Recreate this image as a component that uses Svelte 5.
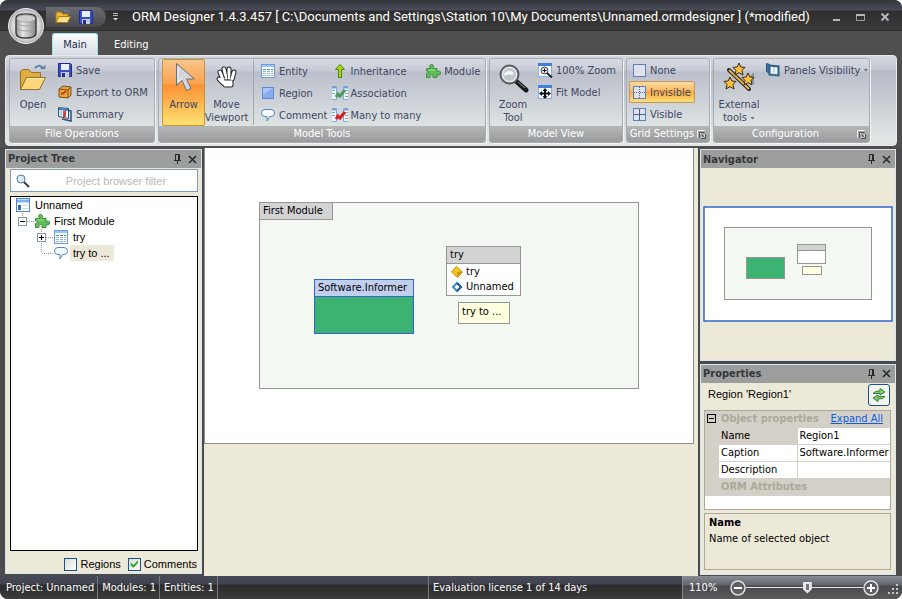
<script lang="ts">
	interface Tool {
		label: string;
		icon: string;
		active?: boolean;
		menu?: boolean;
	}

	interface TreeRow {
		label: string;
		icon: string;
		level: number;
		expander?: '+' | '-';
		last?: boolean;
		selected?: boolean;
	}

	const fileTools: Tool[] = [
		{ label: 'Save', icon: 'save' },
		{ label: 'Export to ORM', icon: 'export' },
		{ label: 'Summary', icon: 'summary' }
	];

	const modelTools: Tool[][] = [
		[
			{ label: 'Entity', icon: 'entity' },
			{ label: 'Region', icon: 'region' },
			{ label: 'Comment', icon: 'comment' }
		],
		[
			{ label: 'Inheritance', icon: 'inherit' },
			{ label: 'Association', icon: 'assoc' },
			{ label: 'Many to many', icon: 'many' }
		],
		[{ label: 'Module', icon: 'module' }]
	];

	const viewTools: Tool[] = [
		{ label: '100% Zoom', icon: 'zoom100' },
		{ label: 'Fit Model', icon: 'fit' }
	];

	const gridTools: Tool[] = [
		{ label: 'None', icon: 'gridnone' },
		{ label: 'Invisible', icon: 'gridhidden', active: true },
		{ label: 'Visible', icon: 'grid' }
	];

	const tree: TreeRow[] = [
		{ label: 'Unnamed', icon: 'project', level: 0 },
		{ label: 'First Module', icon: 'module', level: 1, expander: '-', last: true },
		{ label: 'try', icon: 'entity', level: 2, expander: '+' },
		{ label: 'try to ...', icon: 'comment', level: 2, last: true, selected: true }
	];

	const properties = [
		{ name: 'Name', value: 'Region1', selected: true },
		{ name: 'Caption', value: 'Software.Informer' },
		{ name: 'Description', value: '' }
	];

	// Strokes of the hand cursor: four fingers, thumb and palm
	const HAND = 'M12 18L9 10M15 16l-2-9M18 16V7M21 17l2-7M12 21l-4-4M13 20h7v3h-6z';

	let filter = $state('');
	let regions = $state(false);
	let comments = $state(true);
	let zoom = $state(110);
</script>

{#snippet icon(name: string, size = 16)}
	<svg class="icon" width={size} height={size} viewBox="0 0 {size} {size}" aria-hidden="true">
		{#if name === 'save'}
			<path d="M1.500 1.500h12l1 1v12h-13z" fill="#3b4fc4" stroke="#1f2c8c" />
			<rect x="4" y="2" width="8" height="6" fill="#e6edfb" />
			<rect x="4" y="10" width="8" height="5" fill="#c3c9dc" />
			<rect x="5" y="11" width="3" height="4" fill="#27307c" />
		{:else if name === 'folder'}
			<path d="M1 13V4l1-1h4l2 2h5v3" fill="#e9b73a" stroke="#a87816" />
			<path d="M1 13.500l3-6h11.500l-3 6z" fill="#ffe083" stroke="#a87816" />
			<path d="M9 2q3-2 5 1" fill="none" stroke="#6c8fb6" />
		{:else if name === 'open'}
			<path d="M3.500 27.500v-18l2-2h6l3 3h9v5" fill="#e0ac3c" stroke="#96702a" />
			<path d="M3.500 27.500l6-12h19l-6 12z" fill="#fbd779" stroke="#96702a" />
			<path d="M10 16.500h17" stroke="#fff0b8" />
			<path d="M18 6q5-5 8 1" fill="none" stroke="#5c86a8" stroke-width="2" />
			<path d="M23 7h5.500V3z" fill="#5c86a8" />
		{:else if name === 'export'}
			<path d="M2 5l4-3 8 1v8l-3 3-9-1z" fill="#e9a53e" stroke="#7d4e18" />
			<path d="M2 5l9 1 3-3M11 6v8" fill="none" stroke="#7d4e18" />
			<path d="M4 10l3-1 2-2" fill="none" stroke="#c33d16" stroke-width="2" />
		{:else if name === 'summary'}
			<path d="M1.500 1.500l10 1v10l-10-2z" fill="#f6f9fd" stroke="#2c5277" />
			<path d="M2 3l9 1" stroke="#3a7ab4" stroke-width="2" />
			<path d="M4 5v5" stroke="#a9cbe6" stroke-width="2" />
			<path d="M7.500 5v6" stroke="#d84136" stroke-width="3" />
			<path d="M12 4.500l2 .5v10l-9-2" fill="none" stroke="#2c5277" stroke-width="1.500" />
		{:else if name === 'entity'}
			<rect x="1.500" y="1.500" width="13" height="13" fill="#fafdff" stroke="#6b9bdc" />
			<path d="M2 3h12" stroke="#9fc4f2" stroke-width="2" />
			<path d="M3 6.500h3m1 0h3m1 0h2" stroke="#4aa07a" />
			<path d="M3 8.500h3m1 0h3m1 0h2M3 10.500h3m1 0h3m1 0h2M3 12.500h3m1 0h3m1 0h2" stroke="#9fb4d0" />
		{:else if name === 'region'}
			<rect x="2.500" y="2.500" width="11" height="11" fill="#89acec" stroke="#5c88d6" />
			<path d="M3 3h10L3 10z" fill="#a9c5f5" />
		{:else if name === 'comment'}
			<path d="M5 2.500h6q3.500 0 3.500 3.500t-3.500 3.500H9.500L7 14v-4.500H5Q1.500 9.500 1.500 6T5 2.500z" fill="#f5faff" stroke="#5a86b8" />
		{:else if name === 'inherit'}
			<path d="M8 1.500l4.500 5h-3v8h-3v-8h-3z" fill="#a8d816" stroke="#55850b" />
		{:else if name === 'assoc' || name === 'many'}
			<path d="M0 1.500h4.500v13H0M16 1.500h-4.500v13H16" fill="#eef6ff" stroke="#80a8dc" />
			<path d="M0 2.500h4M12 2.500h4" stroke="#6c9fe0" stroke-width="2" />
			<path d="M0 5.500h3M0 8.500h3M13 5.500h3M13 8.500h3M13 11.500h3" stroke="#7bb098" />
			<path d="M4 12l2-3 2 2 5-6" fill="none" stroke={name === 'many' ? '#dd1c22' : '#4c9a5c'} stroke-width="3" />
		{:else if name === 'module'}
			<path d="M1.500 5.500h4q-2-4 1-4t1.500 4h4v3q3.500-1.500 3.500 1.500t-3.500 1.500v3h-4q1-3-1.500-3t-1.500 3h-3.500v-4q2 0 2-1.500t-2-1z" fill="#62bd5b" stroke="#3f8f41" />
			<path d="M3 7h7" stroke="#9be08e" />
		{:else if name === 'project'}
			<rect x="1.500" y="1.500" width="13" height="13" fill="#fff" stroke="#4f83cc" />
			<path d="M2 4h12" stroke="#7fb0ee" stroke-width="3" />
			<rect x="3" y="8" width="3" height="5" fill="#2e64b4" />
			<path d="M8 8.500h5M8 11.500h5" stroke="#cdd9ea" />
		{:else if name === 'zoom100'}
			<rect x="1.500" y="1.500" width="13" height="13" fill="#f7fbff" stroke="#85b0ec" />
			<path d="M1 2.500h14" stroke="#3f80d8" stroke-width="3" />
			<circle cx="7.500" cy="8.500" r="3.500" fill="#dfe7ec" stroke="#444" />
			<path d="M5.500 8.500h4M7.500 6.500v4" stroke="#111" />
			<path d="M10 11l5 4.500" stroke="#222" stroke-width="2" />
		{:else if name === 'fit'}
			<rect x="1.500" y="1.500" width="13" height="13" fill="#f7fbff" stroke="#85b0ec" />
			<path d="M1 2.500h14" stroke="#3f80d8" stroke-width="3" />
			<path d="M8 4l2.500 3H9v1.500h2V7l3 2.500-3 2.500v-1.500H9V12h1.500L8 15l-2.500-3H7v-1.500H5V12L2 9.500 5 7v1.500h2V7H5.500z" fill="#111" />
		{:else if name === 'gridnone' || name === 'gridhidden' || name === 'grid'}
			<rect x="2.500" y="2.500" width="12" height="12" fill="#dfe2ea" stroke="#5c82bd" />
			{#if name !== 'gridnone'}
				<path d="M8.500 3v11M3 8.500h11" stroke={name === 'grid' ? '#41628f' : '#6b6f78'} stroke-dasharray={name === 'grid' ? 'none' : '1 1'} />
			{/if}
		{:else if name === 'panels'}
			<path d="M1.500 1.500l3 1v9l-3-2z" fill="#3d7ba8" stroke="#234d6c" />
			<path d="M4.500 3.500l9 1v9l-9-1z" fill="#eef5fa" stroke="#2d6288" stroke-width="2" />
			<path d="M9 5v8" stroke="#a4bccd" />
		{:else if name === 'arrow'}
			<path d="M8.500 1.500v22l5.500-5 4.500 10 4.500-2-4.500-9.500h8z" fill="#d3d4dc" stroke="#6b6d78" />
			<path d="M10 5v15l5-5" fill="none" stroke="#f6f6f8" />
		{:else if name === 'hand'}
			<path d={HAND} fill="none" stroke="#222" stroke-width="5" stroke-linecap="round" stroke-linejoin="round" />
			<path d={HAND} fill="#fff" stroke="#fff" stroke-width="3" stroke-linecap="round" stroke-linejoin="round" />
			<path d="M13.500 14l.5 2M16.500 13v3M19.500 13v3" stroke="#555" />
		{:else if name === 'zoomtool'}
			<path d="M20 20l9 8" stroke="#1b1b1b" stroke-width="5" stroke-linecap="round" />
			<path d="M21 20l7 6" stroke="#999" />
			<circle cx="12.500" cy="12.500" r="9" fill="#d3d9dd" stroke="#5a5d60" stroke-width="2" />
			<circle cx="12.500" cy="12.500" r="7" fill="#c0c9cf" stroke="#f4f4f4" />
			<path d="M7 12q4-6 10-1l-2 2q-4-2-7 1z" fill="#f6f9fb" />
		{:else if name === 'wand'}
			<path d="M31 10l-6 7 6 6z" fill="#8b8e94" />
			<path d="M6 8l20 19" stroke="#222" stroke-width="4" stroke-linecap="round" />
			<path d="M6 8l20 19" stroke="#e8b34a" stroke-width="2" />
			{#each [[16, 7], [25, 17], [7, 21]] as [x, y]}
				<path d="M{x} {y - 6}l1.800 4 4.200.4-3 3 1 4.600-4-2.400-4 2.400 1-4.600-3-3 4.200-.4z" fill="#fcc23c" stroke="#3a2a10" />
			{/each}
		{:else if name === 'refresh'}
			<path d="M2 6.500q2-3 7-2.500V1.500L14 5 9 8V6.500z" fill="#7ccc70" stroke="#378038" />
			<path d="M14 9.500q-2 3-7 2.500v2.500L2 11l5-3v1.500z" fill="#7ccc70" stroke="#378038" />
		{:else if name === 'search'}
			<circle cx="6" cy="6" r="4" fill="#dcecf8" stroke="#4d7ea6" />
			<path d="M9 9l5 5" stroke="#3c3f46" stroke-width="2" />
		{/if}
	</svg>
{/snippet}

{#snippet small(tool: Tool)}
	<button class="small" class:active={tool.active}>
		{@render icon(tool.icon)}
		<span>{tool.label}</span>
		{#if tool.menu}<i class="caret"></i>{/if}
	</button>
{/snippet}

{#snippet launcher()}
	<button class="launcher" aria-label="More settings">
		<svg width="9" height="9" viewBox="0 0 9 9">
			<path d="M7.500 .5h-7v7M3 3l4 4M8 4v4H4" fill="none" stroke="#f4f4f4" />
			<path d="M2.500 7.500v-5h5M4.500 4.500l3 3M8.500 4v4.500H4" fill="none" stroke="#4d4f50" />
		</svg>
	</button>
{/snippet}

{#snippet panelHead(title: string)}
	<header class="panel-head">
		<h2>{title}</h2>
		<button aria-label="Pin {title}">
			<svg width="9" height="10" viewBox="0 0 9 10">
				<path d="M2.500 6V.5h4V6M5.500 1v5M1 6.500h7M4.500 7v3" fill="none" stroke="#26282a" />
			</svg>
		</button>
		<button aria-label="Close {title}">
			<svg width="9" height="9" viewBox="0 0 9 9">
				<path d="M1 1l7 7M8 1l-7 7" stroke="#26282a" stroke-width="1.500" />
			</svg>
		</button>
	</header>
{/snippet}

<div class="window">
	<header class="titlebar">
		<div class="quick">
			<button aria-label="Open">{@render icon('folder')}</button>
			<button aria-label="Save">{@render icon('save')}</button>
		</div>
		<button class="quick-more" aria-label="Customize toolbar">
			<svg width="7" height="8" viewBox="0 0 7 8">
				<path d="M1 .5h5M1 2.500h5" stroke="#bbb" />
				<path d="M1 5h5L3.500 7.500z" fill="#ddd" />
			</svg>
		</button>
		<h1>ORM Designer 1.4.3.457 [ C:\Documents and Settings\Station 10\My Documents\Unnamed.ormdesigner ] (*modified)</h1>
		<div class="controls">
			<button aria-label="Minimize">
				<svg width="10" height="10" viewBox="0 0 10 10"><path d="M1 8h7" stroke="#b4b7bd" stroke-width="2" /></svg>
			</button>
			<button aria-label="Maximize">
				<svg width="10" height="10" viewBox="0 0 10 10">
					<path d="M.5 2v6.500h8V2" fill="none" stroke="#9b9ea5" />
					<path d="M0 3h9" stroke="#b4b7bd" stroke-width="2" />
				</svg>
			</button>
			<button aria-label="Close">
				<svg width="10" height="10" viewBox="0 0 10 10"><path d="M1.500 1.500l7 7M8.500 1.500l-7 7" stroke="#b4b7bd" stroke-width="2" /></svg>
			</button>
		</div>
	</header>

	<button class="app-button" aria-label="Application menu">
		<svg width="38" height="38" viewBox="0 0 38 38">
			<defs>
				<radialGradient id="orb">
					<stop offset="0" stop-color="#fff" />
					<stop offset="0.800" stop-color="#d5d5d5" />
					<stop offset="1" stop-color="#a4a4a4" />
				</radialGradient>
				<linearGradient id="drum">
					<stop offset="0" stop-color="#8f8f8f" />
					<stop offset="0.350" stop-color="#e6e6e6" />
					<stop offset="1" stop-color="#858585" />
				</linearGradient>
			</defs>
			<circle cx="19" cy="19" r="17.500" fill="url(#orb)" stroke="#f2f2f2" />
			<path d="M9 11v15q0 5 10 5t10-5V11q0-4-10-4T9 11z" fill="url(#drum)" stroke="#3f3f3f" stroke-width="1.500" />
			<ellipse cx="19" cy="11.500" rx="9" ry="3.500" fill="#cfcfcf" stroke="#a8a8a8" />
			<path d="M10 17q9 4 18 0M10 22q9 4 18 0" fill="none" stroke="#a2a2a2" />
		</svg>
	</button>

	<nav class="tabs">
		<button class="current">Main</button>
		<button>Editing</button>
	</nav>

	<div class="ribbon">
		<section class="group">
			<div class="group-body file">
				<button class="large">{@render icon('open', 32)}<span>Open</span></button>
				<div class="stack">
					{#each fileTools as tool}{@render small(tool)}{/each}
				</div>
			</div>
			<h3>File Operations</h3>
		</section>

		<section class="group">
			<div class="group-body model">
				<button class="large active">{@render icon('arrow', 32)}<span>Arrow</span></button>
				<button class="large">{@render icon('hand', 32)}<span>Move<br />Viewport</span></button>
				<div class="columns">
					{#each modelTools as column}
						<div class="stack">
							{#each column as tool}{@render small(tool)}{/each}
						</div>
					{/each}
				</div>
			</div>
			<h3>Model Tools</h3>
		</section>

		<section class="group">
			<div class="group-body view">
				<button class="large">{@render icon('zoomtool', 32)}<span>Zoom<br />Tool</span></button>
				<div class="stack">
					{#each viewTools as tool}{@render small(tool)}{/each}
				</div>
			</div>
			<h3>Model View</h3>
		</section>

		<section class="group">
			<div class="group-body grid">
				<div class="stack">
					{#each gridTools as tool}{@render small(tool)}{/each}
				</div>
			</div>
			<h3>Grid Settings {@render launcher()}</h3>
		</section>

		<section class="group">
			<div class="group-body config">
				<button class="large">
					{@render icon('wand', 32)}<span>External<br />tools <i class="caret"></i></span>
				</button>
				<div class="stack">
					{@render small({ label: 'Panels Visibility', icon: 'panels', menu: true })}
				</div>
			</div>
			<h3>Configuration {@render launcher()}</h3>
		</section>
	</div>

	<main class="workspace">
		<aside class="panel project">
			{@render panelHead('Project Tree')}
			<label class="filter">
				{@render icon('search')}
				<input type="text" placeholder="Project browser filter" aria-label="Project browser filter" bind:value={filter} />
			</label>
			<ul class="tree">
				{#each tree as row}
					<li class="level-{row.level}">
						{#if row.level > 0}
							<svg class="branch" width="19" height="16" viewBox="0 0 19 16">
								<path d="M7.500 0v{row.last ? 8 : 16}M8 8.500h11" stroke="#999" stroke-dasharray="1 1" />
								{#if row.expander}
									<rect x="3.500" y="4.500" width="8" height="8" fill="#fff" stroke="#8a97a8" />
									<path d="M5 8.500h5{row.expander === '+' ? 'M7.500 6v5' : ''}" stroke="#000" />
								{/if}
							</svg>
						{/if}
						{@render icon(row.icon)}
						<span class:selected={row.selected}>{row.label}</span>
					</li>
				{/each}
			</ul>
			<div class="checks">
				<label><input type="checkbox" bind:checked={regions} />Regions</label>
				<label><input type="checkbox" bind:checked={comments} />Comments</label>
			</div>
		</aside>

		<section class="canvas">
			<div class="page">
				<div class="node module"><h4>First Module</h4></div>
				<div class="node software"><h4>Software.Informer</h4></div>
				<div class="node entity">
					<h4>try</h4>
					<p>
						<svg width="12" height="12" viewBox="0 0 12 12">
							<path d="M.5 6l5-5.500L11.500 6l-5 5.500z" fill="#f4c81e" stroke="#b88c10" />
							<path d="M6 6l5-.5L6.500 11z" fill="#c99410" />
						</svg>
						try
					</p>
					<p>
						<svg width="12" height="12" viewBox="0 0 12 12">
							<path d="M6 2l4 4-4 4-4-4z" fill="#fff" stroke="#2f96c0" stroke-width="2" />
							<path d="M6 10l4-4-4-4" fill="none" stroke="#2a5a94" stroke-width="2" />
						</svg>
						Unnamed
					</p>
				</div>
				<div class="node note">try to ...</div>
			</div>
		</section>

		<div class="side">
			<aside class="panel navigator">
				{@render panelHead('Navigator')}
				<div class="map">
					<svg viewBox="0 0 190 116" role="img" aria-label="Model overview">
						<rect x="1" y="1" width="188" height="114" fill="#fff" stroke="#3366cc" stroke-width="1.500" />
						<rect x="21.500" y="21.500" width="147" height="72" fill="#f3f8f3" stroke="#969696" />
						<rect x="43.500" y="51.500" width="38" height="21" fill="#3cb371" stroke="#969696" />
						<rect x="94.500" y="38.500" width="28" height="19" fill="#fff" stroke="#969696" />
						<path d="M95 39h27v5H95z" fill="#d3d3d3" />
						<path d="M95 44.500h27" stroke="#969696" />
						<rect x="99.500" y="60.500" width="19" height="8" fill="#ffffe0" stroke="#969696" />
					</svg>
				</div>
			</aside>

			<aside class="panel properties">
				{@render panelHead('Properties')}
				<div class="object">
					<span>Region 'Region1'</span>
					<button aria-label="Refresh">{@render icon('refresh')}</button>
				</div>
				<div class="sheet">
					<table>
						<colgroup><col class="gutter" /><col class="key" /><col /></colgroup>
						<tbody>
							<tr class="category">
								<th><button class="fold" aria-label="Collapse"></button></th>
								<th colspan="2">
									<div>Object properties <a href="#expand">Expand All</a></div>
								</th>
							</tr>
							{#each properties as prop}
								<tr>
									<td class="edge"></td>
									<th class:selected={prop.selected}>{prop.name}</th>
									<td>{prop.value}</td>
								</tr>
							{/each}
							<tr class="category">
								<th></th>
								<th colspan="2">ORM Attributes</th>
							</tr>
						</tbody>
					</table>
				</div>
				<div class="hint">
					<b>Name</b>
					<p>Name of selected object</p>
				</div>
			</aside>
		</div>
	</main>

	<footer class="status">
		<div class="facts">
			<span>Project: Unnamed</span>
			<span>Modules: 1</span>
			<span>Entities: 1</span>
		</div>
		<div class="license">Evaluation license 1 of 14 days</div>
		<div class="zoom">
			<output>{zoom}%</output>
			<button aria-label="Zoom out" onclick={() => (zoom = Math.max(10, zoom - 10))}>
				<svg width="16" height="16" viewBox="0 0 16 16">
					<circle cx="8" cy="8" r="7" fill="#5f6063" stroke="#e2e2e2" stroke-width="1.500" />
					<path d="M4 8h8" stroke="#fff" stroke-width="2" />
				</svg>
			</button>
			<input type="range" min="10" max="200" aria-label="Zoom" bind:value={zoom} />
			<button aria-label="Zoom in" onclick={() => (zoom = Math.min(200, zoom + 10))}>
				<svg width="16" height="16" viewBox="0 0 16 16">
					<circle cx="8" cy="8" r="7" fill="#5f6063" stroke="#e2e2e2" stroke-width="1.500" />
					<path d="M4 8h8M8 4v8" stroke="#fff" stroke-width="2" />
				</svg>
			</button>
			<svg class="grip" width="12" height="12" viewBox="0 0 12 12">
				<path d="M9 1h2M5 5h2M9 5h2M1 9h2M5 9h2M9 9h2" stroke="#c8c8c8" stroke-width="2" />
			</svg>
		</div>
	</footer>
</div>

<style>
	:global(body) {
		margin: 0;
		background: #fff;
	}

	.window {
		position: relative;
		display: flex;
		flex-direction: column;
		height: 100vh;
		overflow: hidden;
		border-radius: 8px;
		background: #4f4f4f;
		font: 11px/13px 'DejaVu Sans Condensed', 'Noto Sans', sans-serif;
		color: #000;
	}

	button {
		padding: 0;
		border: 0;
		background: none;
		font: inherit;
		color: inherit;
	}

	h1,
	h2,
	h3,
	h4,
	p,
	ul {
		margin: 0;
		padding: 0;
		font-size: 11px;
		font-weight: normal;
	}

	svg {
		display: block;
		flex: none;
	}

	/* Title bar and tabs */
	.titlebar {
		display: flex;
		align-items: center;
		flex: none;
		height: 31px;
		padding: 3px 12px 0 46px;
		box-sizing: border-box;
		background: linear-gradient(#33353b, #4a4d5a 10px, #2e2e2f 11px, #3a3a3a 30px);
		border-bottom: 1px solid #2d2d2d;
	}

	.quick {
		display: flex;
		gap: 7px;
		padding: 2px 12px 2px 9px;
		border-radius: 0 10px 10px 0;
		background: linear-gradient(#6b6c72, #48494c);
	}

	.quick-more {
		margin: 0 13px 0 6px;
	}

	h1 {
		flex: 1;
		white-space: nowrap;
		font: 13px/18px Roboto, 'Noto Sans', sans-serif;
		color: #fff;
	}

	.controls {
		display: flex;
		gap: 14px;
	}

	.app-button {
		position: absolute;
		left: 7px;
		top: 7px;
	}

	.tabs {
		display: flex;
		flex: none;
		height: 24px;
		padding-left: 52px;
		align-items: flex-end;
		color: #fff;
	}

	.tabs button {
		height: 22px;
		padding: 0 16px;
	}

	.tabs .current {
		width: 46px;
		padding: 0;
		border: 1px solid #a9e4ea;
		border-bottom: 0;
		border-radius: 3px 3px 0 0;
		box-sizing: border-box;
		background: linear-gradient(#fbfdfe, #d6dbe2);
		color: #222b4a;
	}

	/* Ribbon */
	.ribbon {
		display: flex;
		flex: none;
		gap: 3px;
		margin: 0 5px;
		padding: 2px 3px;
		border: 1px solid #e6e8ea;
		border-radius: 4px;
		background: linear-gradient(#d4d7df, #c2c6d0 14px, #b4b9c5 15px, #dfe4e5 80px);
		color: #404760;
	}

	.group {
		flex: none;
		border: 1px solid #a8acb2;
		border-radius: 3px;
		box-shadow: 1px 1px 0 #f0f2f3;
		overflow: hidden;
		background: linear-gradient(#d9dce4, #c6cad4 12px, #babfcb 13px, #dde2e3 66px);
	}

	.group h3 {
		display: flex;
		align-items: center;
		justify-content: center;
		height: 16px;
		line-height: 16px;
		background: linear-gradient(#b4b6b8, #999b9c);
		color: #fff;
		white-space: nowrap;
	}

	.launcher {
		margin: 0 3px 0 auto;
	}

	.group h3:has(.launcher)::before {
		content: '';
		margin-right: auto;
	}

	.group-body {
		display: flex;
		height: 67px;
	}

	.file {
		width: 144px;
	}

	.model {
		width: 326px;
		padding-left: 3px;
		box-sizing: border-box;
	}

	.view {
		width: 132px;
	}

	.grid {
		width: 82px;
	}

	.config {
		width: 155px;
	}

	.large {
		display: flex;
		flex-direction: column;
		align-items: center;
		flex: none;
		width: 46px;
		padding-top: 3px;
	}

	.large .icon {
		margin-bottom: 4px;
	}

	.model .large {
		width: 43px;
	}

	.config .large {
		width: 50px;
	}

	.large.active {
		border: 1px solid #c2952f;
		border-radius: 2px;
		box-sizing: border-box;
		padding-top: 2px;
		background: linear-gradient(#f8c58c, #fba24c 24px, #fb9135 25px, #ffe172);
	}

	.columns {
		display: flex;
		gap: 2px;
		margin: 1px 0 1px 5px;
		border-left: 1px solid #a3a7ae;
		padding-left: 5px;
	}

	.stack {
		display: flex;
		flex-direction: column;
		align-items: stretch;
	}

	.small {
		display: flex;
		align-items: center;
		gap: 3px;
		flex: none;
		height: 22px;
		padding: 0 1px;
		box-sizing: border-box;
		white-space: nowrap;
	}

	.grid .stack {
		padding-left: 2px;
	}

	.grid .small {
		padding: 0 4px 0 2px;
	}

	.grid .active {
		padding: 0 3px 0 1px;
		border: 1px solid #c09a54;
		border-radius: 2px;
		background: linear-gradient(#fbd9a4, #fdb95c 9px, #fba83a 10px, #ffdf7c);
	}

	.caret {
		display: inline-block;
		width: 5px;
		height: 3px;
		vertical-align: middle;
		background: #6a6f7c;
		clip-path: polygon(0 0, 100% 0, 50% 100%);
	}

	/* Panels */
	.workspace {
		display: flex;
		flex: 1;
		min-height: 0;
		margin-top: 2px;
		padding: 0 4px;
		background: #4a4b4d;
	}

	.panel {
		display: flex;
		flex-direction: column;
		border: 1px solid #dbe5ee;
		background: #ece9d8;
	}

	.panel-head {
		display: flex;
		align-items: center;
		gap: 6px;
		flex: none;
		height: 18px;
		padding: 0 4px 0 2px;
		background: #9c9e9d;
	}

	.panel-head h2 {
		flex: 1;
		font-weight: bold;
		color: #33363a;
	}

	.project {
		width: 195px;
		flex: none;
		margin: 1px 2px 2px 1px;
		font: 11px/16px 'Liberation Sans', sans-serif;
	}

	.project .panel-head,
	.properties .panel-head {
		font-family: 'DejaVu Sans Condensed', 'Noto Sans', sans-serif;
	}

	.filter {
		display: flex;
		align-items: center;
		margin: 1px 3px 0 4px;
		padding: 0 4px;
		border: 1px solid #7f9db9;
		background: #fff;
	}

	.filter input {
		flex: 1;
		min-width: 0;
		height: 21px;
		padding: 0 0 0 8px;
		border: 0;
		text-align: center;
		font: inherit;
	}

	.filter input::placeholder {
		color: #b8b8b8;
	}

	.tree {
		flex: 1;
		margin: 4px 3px 0 4px;
		border: 1px solid #000;
		padding-left: 4px;
		background: #fff;
		list-style: none;
	}

	.tree li {
		display: flex;
		align-items: center;
		height: 16px;
	}

	.tree .level-2 {
		padding-left: 19px;
	}

	.tree span {
		margin-left: 1px;
		padding: 0 4px 0 3px;
	}

	.tree .selected {
		background: #ece9d8;
	}

	.checks {
		display: flex;
		justify-content: flex-end;
		gap: 7px;
		padding: 5px 4px 1px;
	}

	.checks label {
		display: flex;
		align-items: center;
		gap: 3px;
	}

	.checks input {
		appearance: none;
		width: 13px;
		height: 13px;
		margin: 0;
		border: 1px solid #1c5180;
		background: linear-gradient(135deg, #dcdcd7, #fff);
	}

	.checks input:checked::before {
		content: '';
		display: block;
		width: 9px;
		height: 9px;
		margin: 1px;
		background: #21a121;
		clip-path: polygon(10% 35%, 40% 60%, 90% 10%, 90% 40%, 40% 92%, 10% 65%);
	}

	/* Model canvas */
	.canvas {
		flex: 1;
		min-width: 0;
		overflow: hidden;
		background: #ece9d8;
	}

	.page {
		position: relative;
		height: 295px;
		margin-right: 4px;
		border: 1px solid #8d8d8d;
		border-top: 0;
		background: #fff;
		font: 11px/16px 'DejaVu Sans Condensed', 'Noto Sans', sans-serif;
	}

	.node {
		position: absolute;
		box-sizing: border-box;
		border: 1px solid #969696;
		background: #fff;
	}

	.node h4 {
		padding: 0 4px 0 3px;
		border-bottom: 1px solid #969696;
		background: #d3d3d3;
		white-space: nowrap;
	}

	.node p {
		display: flex;
		align-items: center;
		gap: 3px;
		height: 15px;
		padding-left: 4px;
	}

	.module {
		left: 54px;
		top: 54px;
		width: 380px;
		height: 187px;
		background: #f3f8f3;
	}

	.module h4 {
		width: 65px;
		border-right: 1px solid #969696;
	}

	.software {
		left: 109px;
		top: 131px;
		width: 100px;
		height: 55px;
		border-color: #3366cc;
		background: #3cb371;
	}

	.software h4 {
		border-color: #3366cc;
		background: #c1cfee;
	}

	.entity {
		left: 241px;
		top: 98px;
		width: 75px;
		height: 50px;
	}

	.note {
		left: 253px;
		top: 154px;
		width: 52px;
		height: 22px;
		padding: 1px 3px;
		background: #ffffe0;
		white-space: nowrap;
	}

	/* Right column */
	.side {
		display: flex;
		flex-direction: column;
		gap: 3px;
		flex: none;
		width: 196px;
		margin: 1px 2px 1px 2px;
	}

	.side .panel {
		box-sizing: border-box;
	}

	.navigator,
	.properties {
		flex: 1;
	}

	.map {
		display: flex;
		flex: 1;
		align-items: center;
		justify-content: center;
	}

	.map svg {
		width: 190px;
	}

	.object {
		display: flex;
		align-items: center;
		justify-content: space-between;
		padding: 1px 5px 4px 7px;
		font: 11px/13px 'Liberation Sans', sans-serif;
	}

	.object button {
		padding: 2px;
		border: 1px solid #1c5180;
		border-radius: 3px;
		background: #f4f3ee;
	}

	.sheet {
		height: 98px;
		margin: 0 4px 0 3px;
		border: 1px solid #aca899;
		background: #fff;
	}

	table {
		width: 100%;
		table-layout: fixed;
		border-collapse: collapse;
	}

	.gutter {
		width: 14px;
	}

	.key {
		width: 78px;
	}

	th,
	td {
		height: 16px;
		padding: 0 0 0 2px;
		border-bottom: 1px solid #d4d0c8;
		white-space: nowrap;
		text-align: left;
		font-weight: normal;
	}

	tr td:last-child {
		border-left: 1px solid #d4d0c8;
	}

	.edge,
	.selected,
	.category th {
		background: #d4d0c8;
	}

	.category th {
		font-weight: bold;
		color: #aca899;
	}

	.category div {
		display: flex;
		justify-content: space-between;
		padding-right: 7px;
	}

	.category a {
		font-weight: normal;
		color: #0a5ce0;
	}

	.fold {
		display: flex;
		align-items: center;
		justify-content: center;
		width: 9px;
		height: 9px;
		border: 1px solid #000;
		box-sizing: border-box;
	}

	.fold::before {
		content: '';
		width: 5px;
		height: 1px;
		background: #000;
	}

	.hint {
		flex: 1;
		margin: 3px 4px 4px 3px;
		padding: 1px 4px;
		border: 1px solid #aca899;
		line-height: 16px;
	}

	/* Status bar */
	.status {
		display: grid;
		grid-template-columns: 428fr 254fr 220px;
		flex: none;
		height: 23px;
		background: linear-gradient(#474a57, #41444e 8px, #2b2b2c 9px, #3c3c3c);
		line-height: 23px;
		white-space: nowrap;
		color: #fff;
	}

	.facts {
		display: flex;
		padding-left: 2px;
	}

	.facts span {
		padding: 0 3px 0 4px;
		border-right: 1px solid #77797f;
	}

	.license {
		padding-left: 4px;
		border-left: 1px solid #77797f;
	}

	.zoom {
		display: flex;
		align-items: center;
		box-sizing: border-box;
		padding: 0 3px 0 6px;
		border-left: 1px solid #8a8c92;
		background: linear-gradient(#8b8d95, #62646c 9px, #48494d 10px, #5b5b5c);
	}

	.zoom output {
		width: 41px;
	}

	.zoom input {
		appearance: none;
		flex: 1;
		min-width: 0;
		height: 16px;
		margin: 0;
		background: linear-gradient(#e6e6e6, #e6e6e6) center / 100% 1px no-repeat;
	}

	.zoom input::-webkit-slider-thumb {
		appearance: none;
		width: 9px;
		height: 12px;
		background: linear-gradient(#777, #777) center 2px / 3px 6px no-repeat #e8e8e8;
		clip-path: polygon(0 0, 100% 0, 100% 65%, 50% 100%, 0 65%);
	}

	.grip {
		align-self: flex-end;
		margin: 0 0 3px 8px;
	}
</style>
